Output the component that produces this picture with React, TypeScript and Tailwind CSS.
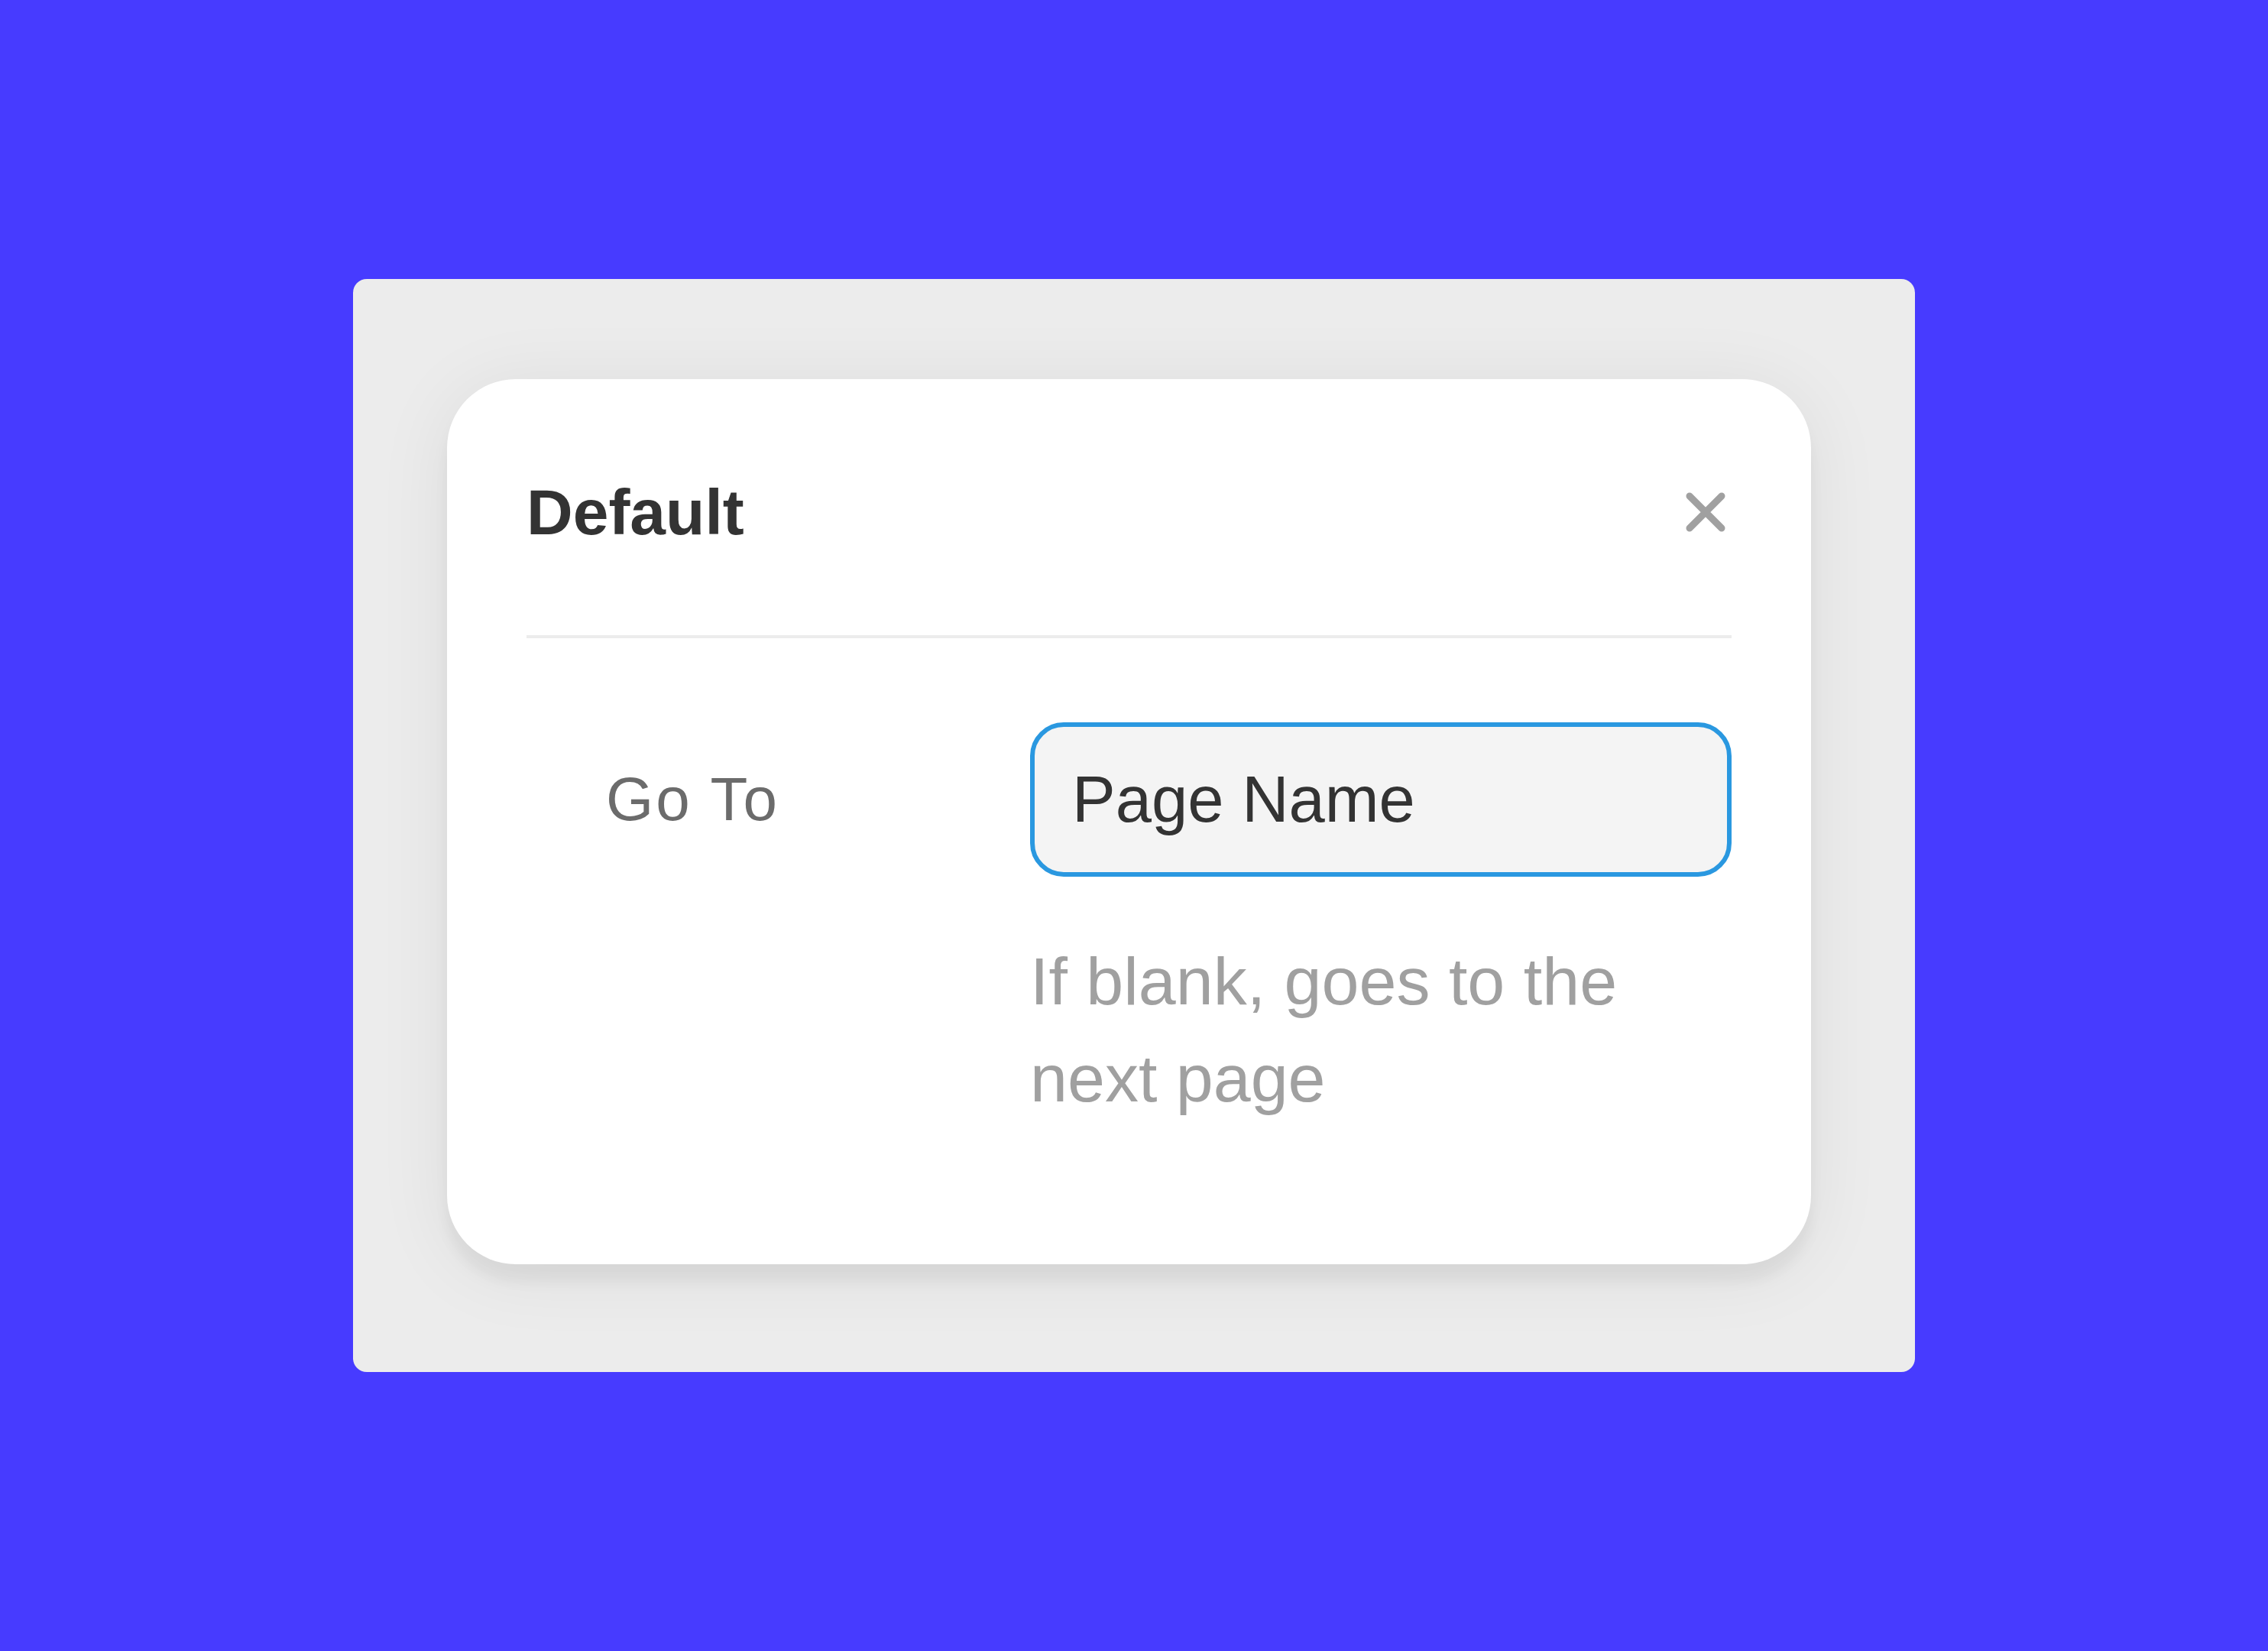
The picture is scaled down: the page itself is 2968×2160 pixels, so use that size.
export default function App() {
  return (
    <div className="flex h-[2160px] w-full items-center justify-center bg-[#473bff] font-['Liberation_Sans',Arial,sans-serif]">
      {/* frame around the dialog */}
      <div className="rounded-[18px] bg-[#ececec] pt-[131px] pr-[136px] pb-[141px] pl-[123px]">
        <div className="w-[1785px] rounded-[90px] bg-white px-[104px] pb-[180px] shadow-[0_22px_18px_rgba(0,0,0,0.05),0_10px_100px_rgba(0,0,0,0.07)]">
          <div className="flex items-center justify-between pt-[124px] pb-[111px]">
            <h2 className="text-[84px] leading-[100px] font-bold text-[#333333]">Default</h2>
            <button className="mr-[6px] flex h-[56px] w-[56px] items-center justify-center">
              <svg width="54" height="54" viewBox="0 0 54 54" fill="none">
                <path d="M6 6 L48 48 M48 6 L6 48" stroke="#a0a0a0" strokeWidth="9" strokeLinecap="round" />
              </svg>
            </button>
          </div>
          <div className="h-[4px] w-full bg-[#ececec]" />

          <div className="mt-[110px] grid grid-cols-[659px_918px]">
            <label className="flex items-center pl-[104px] text-[80px] tracking-[3px] text-[#6b6b6b]">Go To</label>
            <div className="flex h-[202px] items-center rounded-[44px] border-[6px] border-[#2a98e0] bg-[#f4f4f4] pl-[49px] text-[85px] text-[#333333]">
              Page Name
            </div>
            <div />
            <p className="mt-[73px] pr-[60px] text-[88px] leading-[127px] text-[#a0a0a0]">
              If blank, goes to the next page
            </p>
          </div>
        </div>
      </div>
    </div>
  );
}
